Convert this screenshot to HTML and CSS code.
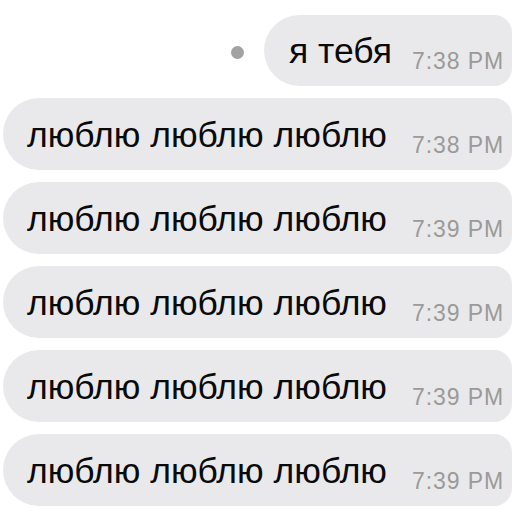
FILE: index.html
```html
<!DOCTYPE html>
<html>
<head>
<meta charset="utf-8">
<link rel="stylesheet" href="styles.css">
</head>
<body>
<div class="chat">
  <div class="row row-out">
    <span class="dot"></span>
    <div class="bubble bubble-out">
      <span class="msg">я тебя</span>
      <span class="time">7:38 PM</span>
    </div>
  </div>
  <div class="row">
    <div class="bubble">
      <span class="msg">люблю люблю люблю</span>
      <span class="time">7:38 PM</span>
    </div>
  </div>
  <div class="row">
    <div class="bubble">
      <span class="msg">люблю люблю люблю</span>
      <span class="time">7:39 PM</span>
    </div>
  </div>
  <div class="row">
    <div class="bubble">
      <span class="msg">люблю люблю люблю</span>
      <span class="time">7:39 PM</span>
    </div>
  </div>
  <div class="row">
    <div class="bubble">
      <span class="msg">люблю люблю люблю</span>
      <span class="time">7:39 PM</span>
    </div>
  </div>
  <div class="row">
    <div class="bubble">
      <span class="msg">люблю люблю люблю</span>
      <span class="time">7:39 PM</span>
    </div>
  </div>
</div>
</body>
</html>
```

FILE: styles.css
```css
html, body {
  margin: 0;
  padding: 0;
  background: #ffffff;
  overflow: hidden;
  width: 512px;
  height: 512px;
}
.chat {
  display: flex;
  flex-direction: column;
  gap: 12px;
  padding-top: 15px;
  font-family: "Liberation Sans", Arial, sans-serif;
}
.row {
  display: flex;
  align-items: center;
}
.row-out {
  justify-content: flex-end;
}
.dot {
  width: 13px;
  height: 13px;
  border-radius: 50%;
  background: #a2a2a2;
  margin-right: 20px;
  margin-top: 4px;
}
.bubble {
  flex: 1;
  margin-left: 3px;
  height: 72px;
  box-sizing: border-box;
  background: #e9e9eb;
  border-radius: 36px 18px 18px 36px;
  display: flex;
  justify-content: space-between;
  align-items: flex-end;
  padding: 0 8px 22px 24px;
}
.bubble-out {
  flex: 0 0 auto;
  width: 248px;
  height: 71px;
  padding-left: 25px;
  margin-left: 0;
}
.msg {
  font-size: 35.5px;
  line-height: 36px;
  color: #0a0a0a;
  margin-bottom: -5px;
}
.time {
  font-size: 23px;
  line-height: 23px;
  letter-spacing: 0.9px;
  color: #9a9a9a;
  margin-bottom: -9px;
}
```
